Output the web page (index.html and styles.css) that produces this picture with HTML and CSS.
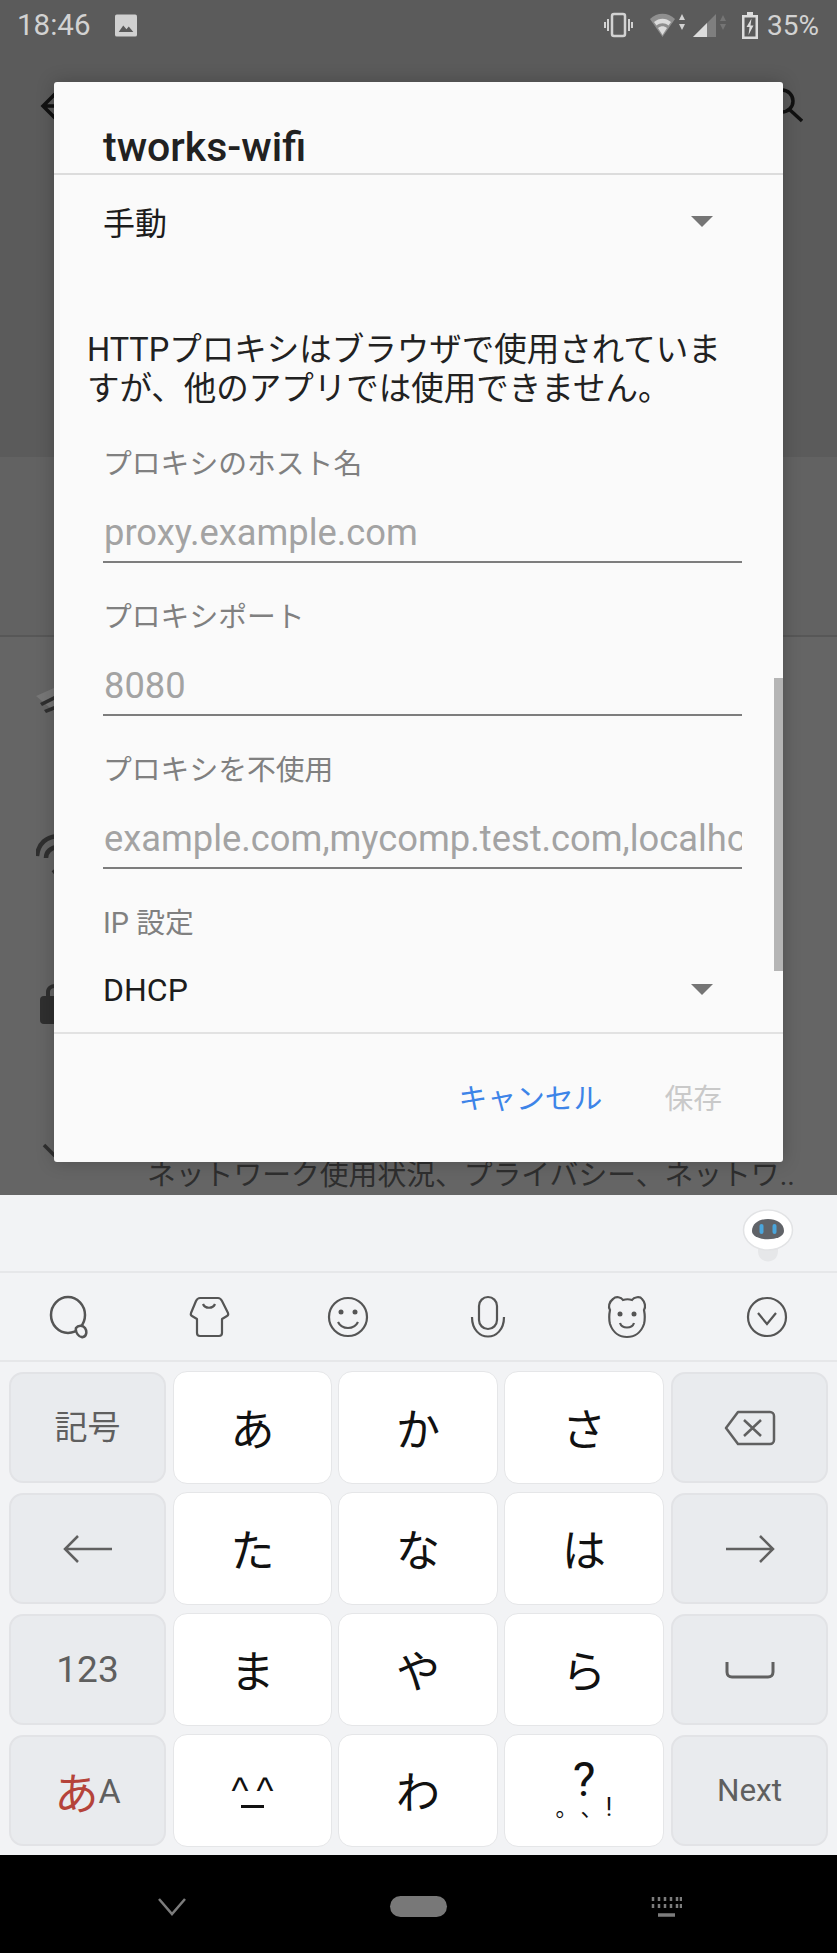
FILE: index.html
```html
<!DOCTYPE html>
<html lang="ja">
<head>
<meta charset="utf-8">
<title>tworks-wifi</title>
<link rel="stylesheet" href="styles.css">
</head>
<body>
<div class="screen">
  <div class="backdrop">
    <header class="status">
      <span class="clock">18:46</span>
      <svg class="pic" viewBox="0 0 24 24"><path d="M2 0h20a2 2 0 0 1 2 2v20a2 2 0 0 1-2 2H2a2 2 0 0 1-2-2V2a2 2 0 0 1 2-2z" fill="#d0d0d0"/><path d="M4 19l5-7 3.500 4 2.500-3 5 6z" fill="#5a5a5a"/></svg>
      <span class="status-right">
        <svg class="si vib" width="29" height="26" viewBox="0 0 29 26"><rect x="8" y="2" width="13" height="22" rx="2" fill="none" stroke="#d2d2d2" stroke-width="2.500"/><path d="M4 7v12M1 10v6M25 7v12M28 10v6" stroke="#d2d2d2" stroke-width="2"/></svg>
        <svg class="si wifi" width="36" height="24" viewBox="0 0 36 24"><path d="M0 6C7-1 18-1 25 6L12.500 24z" fill="#8f8f8f"/><path d="M4 9c5-4.500 12-4.500 17 0l-2.500 3.500c-3.500-3-8.500-3-12 0zM8 15c3-2.500 6-2.500 9 0l-4.500 7z" fill="#dcdcdc"/><path d="M29 7l3-6 3 6zM29 11l3 6 3-6z" fill="#d2d2d2"/></svg>
        <svg class="si sig" width="35" height="25" viewBox="0 0 35 25"><path d="M1 24L24 1v23z" fill="#7f7f7f"/><path d="M1 24L15 10v14z" fill="#dcdcdc"/><path d="M28 8l3-6 3 6zM28 11l3 6 3-6z" fill="#757575"/></svg>
        <svg class="si bat" width="16" height="27" viewBox="0 0 16 27"><path d="M5 0h6v3h5v24H0V3h5z" fill="#dcdcdc"/><rect x="2.500" y="5.500" width="11" height="19" fill="#5a5a5a"/><path d="M9.500 6.500L4.500 15h3l-1 8 5-9.500h-3z" fill="#dcdcdc"/></svg>
        <span class="pct">35%</span>
      </span>
    </header>
    <div class="appbar">
      <svg class="back" width="30" height="30" viewBox="0 0 30 30"><path d="M28 15H4M15 3L3 15l12 12" fill="none" stroke="#111" stroke-width="3.500"/></svg>
      <svg class="search" width="36" height="36" viewBox="0 0 36 36"><circle cx="15" cy="13" r="11" fill="none" stroke="#111" stroke-width="3.500"/><path d="M23 22l12 11" stroke="#111" stroke-width="3.500"/></svg>
    </div>
    <div class="band top-band"></div>
    <div class="band mid-band"></div>
    <div class="lower">
      <svg class="bg-icon i1" width="36" height="32" viewBox="0 0 36 32"><path d="M0 8L18 0l8 30z" fill="#777"/><path d="M4 15L18 8v4L6 18zM8 22l10-4v4l-8 3z" fill="#2f2f2f"/></svg>
      <svg class="bg-icon i2" width="36" height="42" viewBox="0 0 36 42"><path d="M1 22C2 10 10 2 24 2M10 24c0-6 5-11 12-11M17 39l5-4" fill="none" stroke="#2f2f2f" stroke-width="4.500"/></svg>
      <svg class="bg-icon i3" width="36" height="42" viewBox="0 0 36 42"><path d="M12 14V9c0-8 14-8 14 0" fill="none" stroke="#2f2f2f" stroke-width="4"/><rect x="4" y="13" width="30" height="28" rx="4" fill="#2f2f2f"/></svg>
      <svg class="bg-icon i4" width="36" height="14" viewBox="0 0 36 14"><path d="M8 2l12 12" fill="none" stroke="#2f2f2f" stroke-width="3.500"/></svg>
      <p class="bg-text">ネットワーク使用状況、プライバシー、ネットワ..</p>
    </div>
  </div>

  <section class="dialog">
    <h1 class="dialog-title">tworks-wifi</h1>
    <div class="dialog-body">
      <div class="select first-select"><span>手動</span><i class="caret"></i></div>
      <p class="note">HTTPプロキシはブラウザで使用されていま<br>すが、他のアプリでは使用できません。</p>
      <div class="field host">
        <label>プロキシのホスト名</label>
        <div class="input">proxy.example.com</div>
      </div>
      <div class="field">
        <label>プロキシポート</label>
        <div class="input">8080</div>
      </div>
      <div class="field">
        <label>プロキシを不使用</label>
        <div class="input">example.com,mycomp.test.com,localhost</div>
      </div>
      <div class="field ip">
        <label>IP 設定</label>
        <div class="select"><span>DHCP</span><i class="caret"></i></div>
      </div>
      <i class="scrollbar"></i>
    </div>
    <footer class="actions">
      <span class="cancel">キャンセル</span>
      <span class="save">保存</span>
    </footer>
  </section>

  <div class="keyboard">
    <div class="suggest">
      <svg class="bot" width="56" height="58" viewBox="0 0 56 58"><path d="M18 40h20v4c0 14-20 14-20 0z" fill="#e6e7e9"/><ellipse cx="28" cy="23" rx="24.500" ry="20" fill="#fff" stroke="#e2e3e5" stroke-width="1.500"/><path d="M12 24c0-16 32-16 32 0 0 11-32 11-32 0z" fill="#606368"/><rect x="19.500" y="17" width="4" height="10" rx="2" fill="#4aa6dc"/><rect x="32.500" y="17" width="4" height="10" rx="2" fill="#4aa6dc"/></svg>
    </div>
    <div class="tools">
      <svg class="tool" width="44" height="44" viewBox="0 0 44 44"><ellipse cx="21" cy="20" rx="17" ry="18" fill="none" stroke="#555" stroke-width="2.500"/><path d="M29 33c2-3 7-3 9 0 2 3 2 8-2 9-4 1-8-5-7-9z" fill="#f2f3f5" stroke="#555" stroke-width="2.500"/></svg>
      <svg class="tool" width="44" height="44" viewBox="0 0 44 44"><path d="M13 3h18c2 0 3 1 4 3l6 12c.5 1.500 0 2.500-1 3l-5 3v14c0 2-1 3-3 3H13c-2 0-3-1-3-3V24l-5-3c-1-.5-1.500-1.500-1-3L9 6c1-2 2-3 4-3z" fill="none" stroke="#555" stroke-width="2.200" stroke-linejoin="round"/><path d="M16 9c2 5 10 5 12 0" fill="none" stroke="#555" stroke-width="2.200"/></svg>
      <svg class="tool" width="44" height="44" viewBox="0 0 44 44"><circle cx="22" cy="22" r="19" fill="none" stroke="#555" stroke-width="2.200"/><circle cx="15" cy="17" r="2.500" fill="#555"/><circle cx="29" cy="17" r="2.500" fill="#555"/><path d="M12 27c4 8 16 8 20 0" fill="none" stroke="#555" stroke-width="2.200"/></svg>
      <svg class="tool" width="44" height="44" viewBox="0 0 44 44"><rect x="13" y="2" width="18" height="32" rx="9" fill="none" stroke="#555" stroke-width="2.200"/><path d="M6 22c0 26 32 26 32 0" fill="none" stroke="#555" stroke-width="2.200"/></svg>
      <svg class="tool" width="44" height="44" viewBox="0 0 44 44"><path d="M8 4c3-3 8-2 10 1 3-1 6-1 9 0 2-3 8-4 10-1 3 3 4 8 2 11 1 5 1 10 0 14-3 9-10 13-17 13S8 38 5 29c-1-4-1-9 0-14-2-3-1-8 3-11z" fill="none" stroke="#555" stroke-width="2.200"/><circle cx="15" cy="19" r="2.500" fill="#555"/><circle cx="29" cy="19" r="2.500" fill="#555"/><path d="M15 28c2 6 12 6 14 0" fill="none" stroke="#555" stroke-width="2.200"/></svg>
      <svg class="tool" width="44" height="44" viewBox="0 0 44 44"><circle cx="22" cy="22" r="19" fill="none" stroke="#555" stroke-width="2.200"/><path d="M13 18l9 11 9-11" fill="none" stroke="#555" stroke-width="2.200"/></svg>
    </div>
    <div class="keys">
      <div class="key fn label-cjk">記号</div>
      <div class="key kana">あ</div>
      <div class="key kana">か</div>
      <div class="key kana">さ</div>
      <div class="key fn"><svg width="52" height="36" viewBox="0 0 52 36"><path d="M14 2h32a4 4 0 0 1 4 4v24a4 4 0 0 1-4 4H14L2 18z" fill="none" stroke="#606060" stroke-width="2.500" stroke-linejoin="round"/><path d="M20 10l17 16M37 10L20 26" stroke="#606060" stroke-width="2.500"/></svg></div>

      <div class="key fn"><svg width="50" height="30" viewBox="0 0 50 30"><path d="M49 15H2M15 2L2 15l13 13" fill="none" stroke="#606060" stroke-width="2.500"/></svg></div>
      <div class="key kana">た</div>
      <div class="key kana">な</div>
      <div class="key kana">は</div>
      <div class="key fn"><svg width="50" height="30" viewBox="0 0 50 30"><path d="M1 15h47M35 2l13 13-13 13" fill="none" stroke="#606060" stroke-width="2.500"/></svg></div>

      <div class="key fn label-num">123</div>
      <div class="key kana">ま</div>
      <div class="key kana">や</div>
      <div class="key kana">ら</div>
      <div class="key fn"><svg width="50" height="18" viewBox="0 0 50 18"><path d="M2 1v10c0 3 2 5 5 5h36c3 0 5-2 5-5V1" fill="none" stroke="#606060" stroke-width="3"/></svg></div>

      <div class="key fn mode"><span class="mode-a">あ</span><span class="mode-b">A</span></div>
      <div class="key face"><span class="face-eyes">^ ^</span><i class="face-mouth"></i></div>
      <div class="key kana">わ</div>
      <div class="key punct"><span class="q">?</span><span class="marks"><span class="mk">。</span><span class="mk">、</span><span class="bang">!</span></span></div>
      <div class="key fn label-next">Next</div>
    </div>
  </div>

  <nav class="navbar">
    <svg width="28" height="18" viewBox="0 0 28 18"><path d="M1 1l13 15L27 1" fill="none" stroke="#7c7c7c" stroke-width="2.500"/></svg>
    <i class="home"></i>
    <svg width="31" height="20" viewBox="0 0 31 20"><path d="M2 0v4M8 0v4M14 0v4M20 0v4M26 0v4M30 0v4M2 7v4M8 7v4M14 7v4M20 7v4M26 7v4M30 7v4" stroke="#7c7c7c" stroke-width="2.500"/><path d="M7 18h17" stroke="#7c7c7c" stroke-width="3.500"/></svg>
  </nav>
</div>
</body>
</html>
```
FILE: styles.css
```css
* { box-sizing: border-box; }
html, body { margin: 0; padding: 0; }
body {
  width: 837px;
  height: 1953px;
  overflow: hidden;
  font-family: Roboto, "Noto Sans CJK JP", sans-serif;
  background: #000;
}
p, h1 { margin: 0; }
.screen { position: relative; width: 837px; height: 1953px; }

/* dimmed settings page behind the dialog */
.backdrop { height: 1195px; background: #5b5b5b; display: flex; flex-direction: column; overflow: hidden; }
.status { flex: none; height: 52px; display: flex; align-items: center; padding: 0 18px 2px 17px; color: #d2d2d2; }
.clock { font-size: 29.500px; width: 98px; flex: none; }
.pic { width: 22px; height: 23px; flex: none; }
.status-right { margin-left: auto; display: flex; align-items: center; }
.si { display: block; flex: none; }
.si.wifi { margin-left: 17px; }
.si.sig { margin-left: 6px; }
.si.bat { margin-left: 15px; }
.pct { font-size: 28px; margin-left: 9px; }
.appbar { flex: none; height: 108px; display: flex; align-items: center; justify-content: space-between; padding: 0 34px 0 40px; }
.top-band { flex: none; height: 299px; border-bottom: 2px solid #626262; }
.mid-band { flex: none; height: 178px; background: #626262; border-bottom: 2px solid #575757; }
.lower { flex: 1; min-height: 0; background: #656565; padding: 51px 0 0 36px; }
.bg-icon { display: block; }
.i1 { margin-bottom: 114px; }
.i2 { margin-bottom: 107px; }
.i3 { margin-bottom: 118px; }
.bg-text { margin: 0 0 0 111px; font-size: 28.800px; line-height: 36px; color: #2e2e2e; white-space: nowrap; }

/* dialog */
.dialog {
  position: absolute;
  left: 54px;
  top: 82px;
  width: 729px;
  height: 1080px;
  background: #fafafa;
  border-radius: 3px;
  box-shadow: 0 0 18px rgba(0, 0, 0, .22);
  display: flex;
  flex-direction: column;
}
.dialog-title {
  flex: none;
  height: 93px;
  padding: 43px 0 0 49px;
  font-size: 41px;
  line-height: 44px;
  font-weight: 500;
  color: #212121;
  border-bottom: 2px solid #dcdcdc;
}
.dialog-body { flex: none; position: relative; height: 859px; border-bottom: 2px solid #e2e2e2; }
.select { display: flex; align-items: center; justify-content: space-between; font-size: 32px; color: #1c1c1c; padding: 0 70px 0 49px; }
.first-select { height: 56px; margin-top: 18px; }
.caret { width: 0; height: 0; border-left: 11px solid transparent; border-right: 11px solid transparent; border-top: 11px solid #757575; }
.note { margin: 81.500px 0 0 33px; font-size: 32.500px; line-height: 39.500px; color: #212121; white-space: nowrap; }
.field { margin: 0 41px 0 49px; padding-top: 38px; }
.field.host { padding-top: 38px; }
.field label { display: block; font-size: 28.800px; line-height: 32px; color: #808080; }
.input { margin-top: 31px; height: 52px; padding-left: 1px; font-size: 36.300px; line-height: 44px; color: #a3a3a3; border-bottom: 2px solid #7d7d7d; white-space: nowrap; overflow: hidden; width: 100%; }
.field.ip { margin-right: 0; margin-left: 0; padding-top: 38px; }
.field.ip label { padding-left: 49px; }
.ip .select { height: 56px; margin-top: 23px; }
.scrollbar { position: absolute; right: 0; top: 503px; width: 9px; height: 293px; background: #b5b5b5; }
.actions { flex: 1; display: flex; justify-content: flex-end; align-items: center; padding: 0 61px 3px 0; gap: 62px; font-size: 28.800px; }
.cancel { color: #3d84e8; }
.save { color: #c9c9c9; }

/* keyboard */
.keyboard { height: 660px; background: #f2f3f5; display: flex; flex-direction: column; }
.suggest { flex: none; height: 78px; padding: 12px 0 0 740px; border-bottom: 2px solid #e6e7e9; }
.bot { display: block; }
.tools { flex: none; height: 89px; display: flex; border-bottom: 2px solid #e6e7e9; padding: 0 0 0 47px; align-items: center; }
.tool { display: block; margin-right: 95.600px; flex: none; }
.keys {
  display: grid;
  grid-template-columns: 157px 157px 158px 158px 157px;
  grid-auto-rows: 111px;
  column-gap: 8px;
  row-gap: 10px;
  padding: 10px 0 0 9px;
}
.key { display: flex; align-items: center; justify-content: center; border-radius: 14px; background: #fff; border: 1px solid #e5e6e8; margin: -1px; }
.key.fn { background: #e9ebee; border: 2px solid #e2e3e6; color: #5f5f5f; margin: 0; }
.kana { font-size: 44px; color: #111; font-family: "Noto Sans CJK JP", sans-serif; padding-bottom: 2px; }
.label-cjk { font-size: 33px; padding-bottom: 5px; }
.label-num { font-size: 37px; font-weight: 400; }
.label-next { font-size: 31.500px; }
.mode { font-size: 34px; }
.mode-a { color: #b5433a; font-size: 44px; font-family: "Noto Sans CJK JP", sans-serif; }
.mode-b { color: #5f5f5f; }
.face { color: #111; flex-direction: column; }
.face-eyes { font-size: 36px; line-height: 34px; word-spacing: -2px; font-family: "Liberation Sans", sans-serif; }
.face-mouth { width: 23px; height: 3px; background: #111; margin-top: -3px; }
.punct { flex-direction: column; color: #111; }
.q { font-size: 48px; line-height: 36px; }
.marks { display: flex; align-items: baseline; line-height: 16px; margin-bottom: 4px; }
.mk { width: 25px; padding-left: 9px; font-size: 22px; font-family: "Noto Sans CJK JP", sans-serif; }
.bang { width: 25px; text-align: center; font-size: 25px; }

.navbar { height: 98px; background: #000; display: flex; align-items: center; justify-content: space-between; padding: 5px 155px 0 158px; }
.home { width: 57px; height: 21px; border-radius: 11px; background: #787878; }
```
